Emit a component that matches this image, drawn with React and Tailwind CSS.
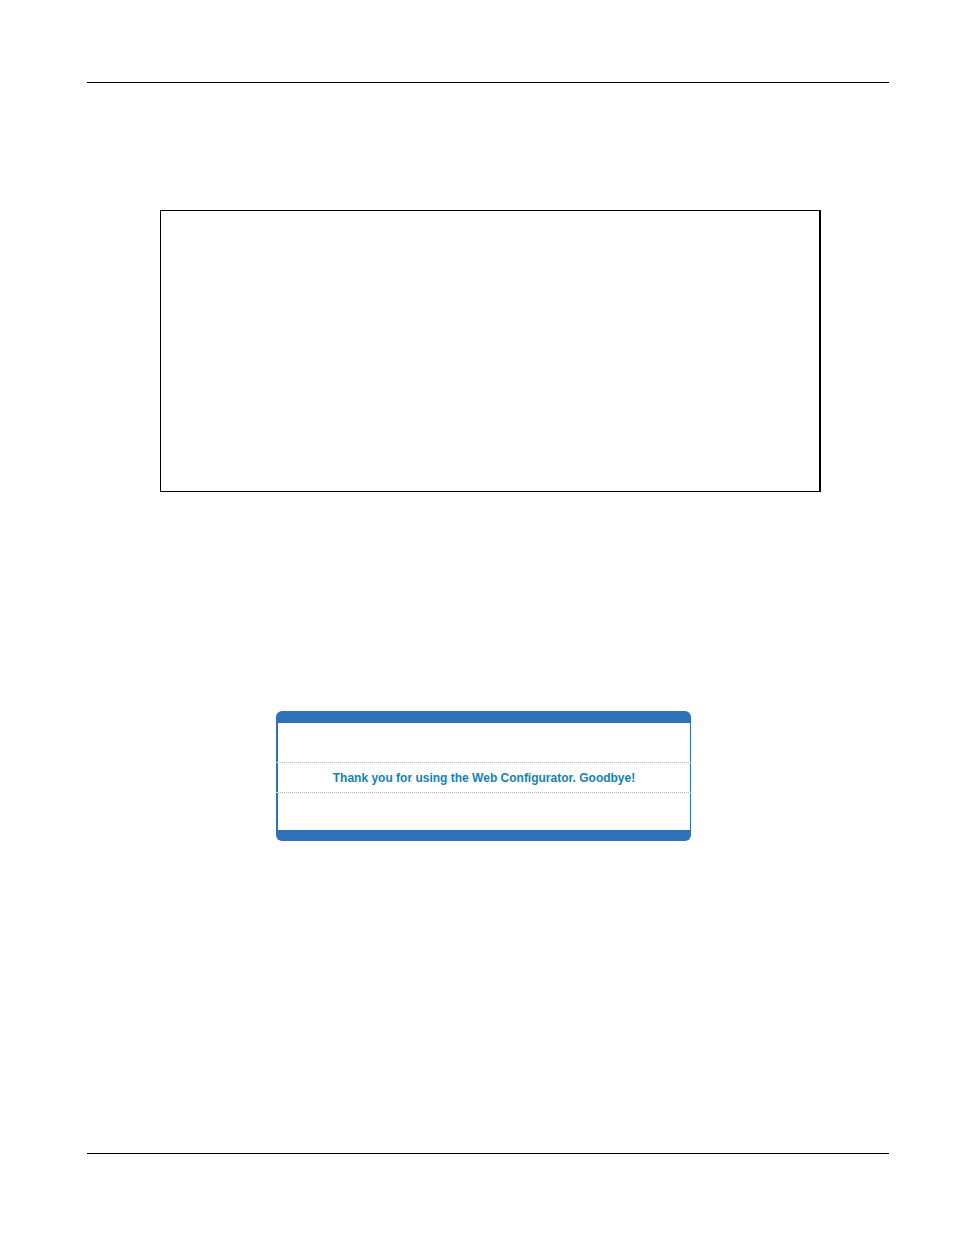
import React from 'react';

const LogoutDialog = () => {
  return (
    <section className="mr-[198px] ml-[189px] overflow-hidden rounded-md bg-[#3072b8]">
      <div className="h-3" />
      <div className="mr-px ml-[2px] h-[39px] bg-white" />
      {/* the dotted rules run across the side borders */}
      <div className="border-y border-dotted border-[#b4b4b4] bg-white">
        <p className="border-r border-l-2 border-solid border-[#3072b8] pt-px text-center text-[12px] leading-[28px] font-bold whitespace-nowrap text-[#1482b4]">
          Thank you for using the Web Configurator. Goodbye!
        </p>
      </div>
      <div className="mr-px ml-[2px] h-[37px] bg-white" />
      <div className="h-[11px]" />
    </section>
  );
};

const App = () => {
  return (
    <div className="min-h-screen bg-white pt-[82px] pr-[65px] pb-[81px] pl-[87px] font-['Liberation_Sans',Arial,sans-serif]">
      <hr className="border-t border-black" />

      <main className="pt-[127px] pb-[312px]">
        {/* Note frame */}
        <div className="mr-[68px] mb-[219px] ml-[73px] h-[282px] border border-r-2 border-black" />

        <LogoutDialog />
      </main>

      <hr className="border-t border-black" />
    </div>
  );
};

export default App;
